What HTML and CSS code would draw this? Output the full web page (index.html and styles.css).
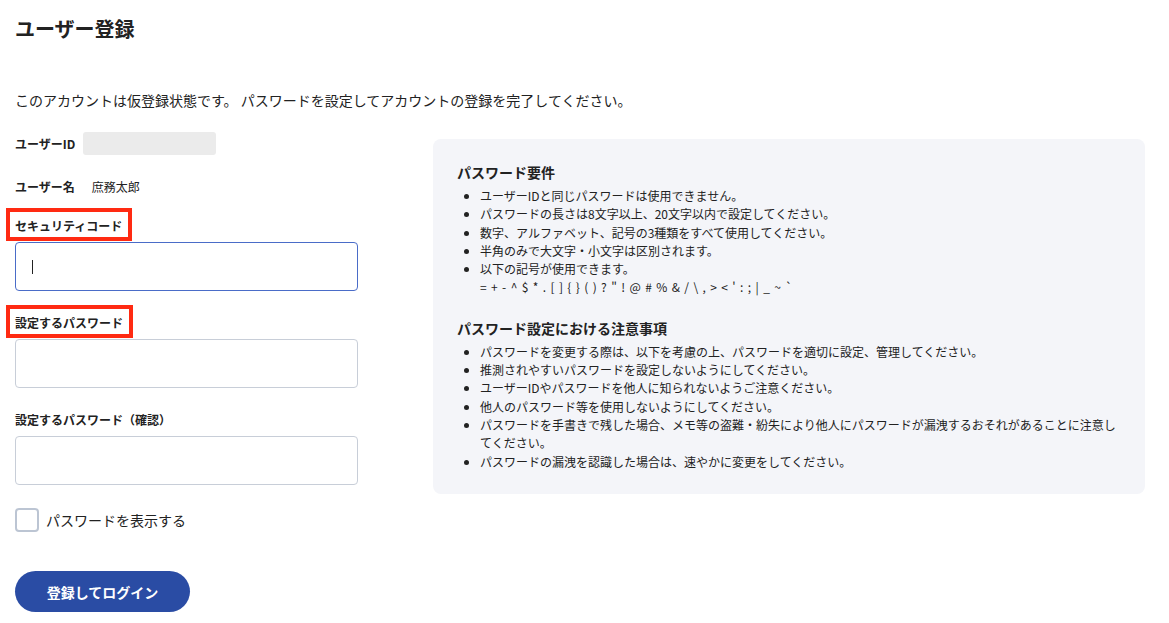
FILE: index.html
```html
<!DOCTYPE html>
<html lang="ja">
<head>
    <meta charset="UTF-8">
    <meta name="viewport" content="width=device-width, initial-scale=1.0">
    <title>ユーザー登録</title>
    <link rel="stylesheet" href="styles.css">
</head>
<body>
    <main class="page">
        <h1 class="page-title">ユーザー登録</h1>
        <p class="lead">このアカウントは仮登録状態です。 パスワードを設定してアカウントの登録を完了してください。</p>

        <div class="layout">
            <form class="form">
                <div class="info-row">
                    <span class="info-label">ユーザーID</span>
                    <span class="id-box"></span>
                </div>
                <div class="info-row info-row-name">
                    <span class="info-label">ユーザー名</span>
                    <span class="info-value">庶務太郎</span>
                </div>

                <div class="field">
                    <label class="field-label marked" for="code">セキュリティコード</label>
                    <div class="input-wrap">
                        <input type="text" id="code" class="text-input is-focus" autocomplete="off">
                        <span class="caret"></span>
                    </div>
                </div>

                <div class="field">
                    <label class="field-label marked" for="pw">設定するパスワード</label>
                    <div class="input-wrap">
                        <input type="password" id="pw" class="text-input">
                    </div>
                </div>

                <div class="field">
                    <label class="field-label" for="pw2">設定するパスワード（確認）</label>
                    <div class="input-wrap">
                        <input type="password" id="pw2" class="text-input">
                    </div>
                </div>

                <label class="check">
                    <input type="checkbox" class="check-input">
                    <span class="check-box"></span>
                    <span class="check-text">パスワードを表示する</span>
                </label>

                <button type="button" class="submit-btn">登録してログイン</button>
            </form>

            <aside class="notes">
                <h3 class="notes-title">パスワード要件</h3>
                <ul class="notes-list">
                    <li>ユーザーIDと同じパスワードは使用できません。</li>
                    <li>パスワードの長さは8文字以上、20文字以内で設定してください。</li>
                    <li>数字、アルファベット、記号の3種類をすべて使用してください。</li>
                    <li>半角のみで大文字・小文字は区別されます。</li>
                    <li>以下の記号が使用できます。<br><span class="symbols">= + - ^ $ * . [ ] { } ( ) ? " ! @ # % &amp; / \ , &gt; &lt; ' : ; | _ ~ `</span></li>
                </ul>

                <h3 class="notes-title notes-title-second">パスワード設定における注意事項</h3>
                <ul class="notes-list">
                    <li>パスワードを変更する際は、以下を考慮の上、パスワードを適切に設定、管理してください。</li>
                    <li>推測されやすいパスワードを設定しないようにしてください。</li>
                    <li>ユーザーIDやパスワードを他人に知られないようご注意ください。</li>
                    <li>他人のパスワード等を使用しないようにしてください。</li>
                    <li>パスワードを手書きで残した場合、メモ等の盗難・紛失により他人にパスワードが漏洩するおそれがあることに注意してください。</li>
                    <li>パスワードの漏洩を認識した場合は、速やかに変更をしてください。</li>
                </ul>
            </aside>
        </div>
    </main>
</body>
</html>
```

FILE: styles.css
```css
:root {
    --text: #222;
    --brand: #2a4ca4;
    --mark: #ff2a12;
    --border: #c8ced8;
    --focus: #4a6cc8;
    --panel-bg: #f4f5f9;
}

body {
    margin: 0;
    padding: 0;
    font-family: "Noto Sans CJK JP", "Noto Sans", sans-serif;
    color: var(--text);
    background: #fff;
}

.page {
    padding: 14px 24px 0 15px;
}

.page-title {
    margin: 0;
    font-size: 20px;
    line-height: 30px;
    font-weight: 700;
}

.lead {
    margin: 46px 0 0;
    font-size: 14px;
    line-height: 21px;
}

.layout {
    display: grid;
    grid-template-columns: 343px 1fr;
    column-gap: 75px;
    align-items: start;
    margin-top: 20px;
}

/* left column */

.form {
    display: flex;
    flex-direction: column;
    align-items: flex-start;
}

.info-row {
    display: flex;
    align-items: center;
    height: 24px;
    font-size: 12px;
}

.info-row-name {
    margin-top: 19px;
}

.info-label {
    font-weight: 700;
}

.id-box {
    width: 133px;
    height: 23px;
    margin-left: 8px;
    background: #ebebeb;
    border-radius: 3px;
}

.info-value {
    margin-left: 17px;
}

.field {
    align-self: stretch;
    margin-top: 19px;
}

.field + .field {
    margin-top: 23px;
}

.field-label {
    display: block;
    position: relative;
    width: max-content;
    margin-bottom: 7px;
    font-size: 12px;
    line-height: 18px;
    font-weight: 700;
}

.marked::after {
    content: '';
    position: absolute;
    top: -9px;
    left: -9px;
    right: -10px;
    bottom: -6px;
    border: 4px solid var(--mark);
}

.input-wrap {
    position: relative;
}

.text-input {
    display: block;
    box-sizing: border-box;
    width: 100%;
    height: 49px;
    margin: 0;
    padding: 0 16px;
    border: 1px solid var(--border);
    border-radius: 4px;
    background: #fff;
    font-family: inherit;
    font-size: 14px;
    outline: none;
}

.text-input.is-focus {
    border-color: var(--focus);
}

.caret {
    position: absolute;
    left: 17px;
    top: 18px;
    width: 1px;
    height: 14px;
    background: #222;
}

.check {
    display: flex;
    align-items: center;
    margin-top: 23px;
    cursor: pointer;
}

.check-input {
    display: none;
}

.check-box {
    box-sizing: border-box;
    width: 24px;
    height: 24px;
    border: 2px solid #bcc5d3;
    border-radius: 4px;
    background: #fff;
}

.check-text {
    margin-left: 7px;
    font-size: 14px;
    line-height: 21px;
}

.submit-btn {
    width: 175px;
    height: 41px;
    margin-top: 39px;
    padding: 0;
    border: none;
    border-radius: 21px;
    background: var(--brand);
    color: #fff;
    font-family: inherit;
    font-size: 14px;
    font-weight: 700;
    cursor: pointer;
}

/* right panel */

.notes {
    margin-top: 8px;
    padding: 23px 24px 23px;
    background: var(--panel-bg);
    border-radius: 8px;
}

.notes-title {
    margin: 0;
    font-size: 14px;
    line-height: 21px;
    font-weight: 700;
}

.notes-title-second {
    margin-top: 21px;
}

.notes-list {
    margin: 4px 0 0;
    padding-left: 23px;
    font-size: 12px;
    line-height: 18.3px;
    list-style: disc;
}

.symbols {
    word-spacing: 1.7px;
}
```
